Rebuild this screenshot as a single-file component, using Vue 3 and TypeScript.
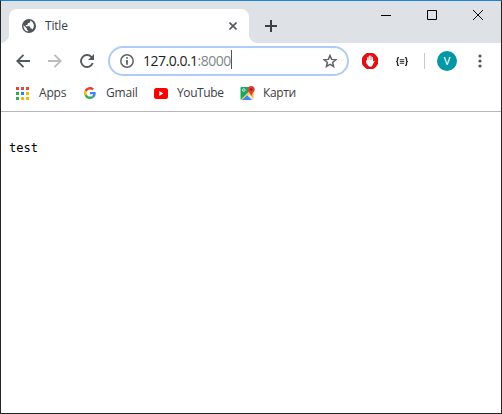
<script setup lang="ts">
import { ref } from 'vue'

interface Bookmark {
  id: string
  label: string
}

const host = ref<string>('127.0.0.1')
const port = ref<string>(':8000')
const bookmarks: Bookmark[] = [
  { id: 'apps', label: 'Apps' },
  { id: 'gmail', label: 'Gmail' },
  { id: 'youtube', label: 'YouTube' },
  { id: 'maps', label: 'Карти' },
]
const appColors: string[] = [
  '#ea4335', '#ea4335', '#ea4335',
  '#34a853', '#1a8cf0', '#fbb505',
  '#34a853', '#fbb505', '#fbb505',
]
</script>

<template>
  <div class="window">
    <header class="tabstrip">
      <div class="tab">
        <svg class="globe" viewBox="0 0 14 14">
          <circle cx="7" cy="7" r="7" fill="#50545a" />
          <path d="M8.2 1.4V2.7c0 .7-.6 1.2-1.3 1.2H5.8v1.2c0 .5-.4.9-.9.9H3.700v1.200H7.500c.5 0 .8.4.8.8v1.600h.9c.6 0 1 .3 1.200.8A5.600 5.600 0 0 0 8.200 1.400z" fill="#fff" />
          <path d="M1.500 6.200 4.900 9.500v.7c0 .7.600 1.200 1.300 1.200v1.200A5.600 5.600 0 0 1 1.500 6.200z" fill="#fff" />
        </svg>
        <span class="tab-title">Title</span>
        <svg class="tab-close" viewBox="0 0 8 8"><path d="M.5.5l7 7M7.500.5l-7 7" stroke="#55595e" stroke-width="1.600" /></svg>
      </div>
      <svg class="new-tab" viewBox="0 0 12 12"><path d="M6 0v12M0 6h12" stroke="#3c4043" stroke-width="2" /></svg>
      <div class="controls">
        <svg width="10" height="10" viewBox="0 0 10 10"><path d="M0 5.500h10" stroke="#000" /></svg>
        <svg width="10" height="10" viewBox="0 0 10 10"><path d="M.5.5h9v9h-9z" fill="none" stroke="#000" /></svg>
        <svg width="10" height="10" viewBox="0 0 10 10"><path d="M0 0l10 10M10 0L0 10" stroke="#000" /></svg>
      </div>
    </header>

    <nav class="toolbar">
      <div class="navigation">
        <svg viewBox="0 0 14 14"><path d="M14 7H1.500M7.500.8L1.300 7l6.200 6.200" fill="none" stroke="#55595e" stroke-width="1.900" /></svg>
        <svg viewBox="0 0 14 14"><path d="M0 7h12.500M6.500.8L12.700 7l-6.200 6.200" fill="none" stroke="#babcbe" stroke-width="1.900" /></svg>
        <svg viewBox="0 0 14 14">
          <path d="M12.700 9A6 6 0 1 1 11.300 2.800L12.200 3.700" fill="none" stroke="#55595e" stroke-width="1.900" />
          <path d="M14 0v6H8z" fill="#55595e" />
        </svg>
      </div>
      <div class="omnibox">
        <svg class="info" viewBox="0 0 14 14">
          <circle cx="7" cy="7" r="6.200" fill="none" stroke="#5f6368" stroke-width="1.500" />
          <path d="M7 3.200v1.600M7 6v4.800" stroke="#5f6368" stroke-width="1.800" />
        </svg>
        <span class="host">{{ host }}</span><span class="port">{{ port }}</span><i class="caret"></i>
        <svg class="star" viewBox="0 0 14 14"><path d="M7 1.500l1.600 3.900 4.200.3-3.200 2.700 1 4.100L7 10.300l-3.600 2.200 1-4.100L1.200 5.700l4.200-.3z" fill="none" stroke="#5f6368" stroke-width="1.500" /></svg>
      </div>
      <svg class="blocker" viewBox="0 0 16 16">
        <path d="M5.200 0h5.600Q12 .2 13.500 1.800 15.800 4 16 5.200v5.600q-.2 1.200-2.500 3.400Q12 15.800 10.800 16H5.200Q4 15.800 2.500 14.200.2 12 0 10.800V5.200Q.2 4 2.500 1.800 4 .2 5.200 0z" fill="#e40d12" />
        <path d="M5.800 8V4.600M7.300 7.500V3.200M8.900 7.500V3.200M10.400 8V4.600" stroke="#fff" stroke-width="1.200" stroke-linecap="round" />
        <path d="M5.200 7h5.800v3.500c0 2-1 3.200-2.600 3.200-1.500 0-2.500-.8-3.200-2.400z" fill="#fff" />
        <path d="M10.500 10.800l1.500-2.500M5.200 10.500L4.500 8" stroke="#fff" stroke-width="1.200" stroke-linecap="round" />
      </svg>
      <svg class="braces" viewBox="0 0 14 10">
        <path d="M3.700.8H3q-1 0-1 1v1.700Q2 4.800.5 5 2 5.200 2 6.500v1.700q0 1 1 1h.7M10.300.8h.7q1 0 1 1v1.700q0 1.300 1.500 1.500-1.500.2-1.500 1.500v1.700q0 1-1 1h-.7" fill="none" stroke="#202124" stroke-width="1.400" />
        <path d="M4.500 3h5M4.500 5h5M4.500 7h5" stroke="#333" stroke-width="1.100" />
      </svg>
      <i class="divider"></i>
      <span class="avatar">V</span>
      <svg class="more" viewBox="0 0 4 14"><g fill="#50545a"><circle cx="2" cy="2" r="1.600" /><circle cx="2" cy="7" r="1.600" /><circle cx="2" cy="12" r="1.600" /></g></svg>
    </nav>

    <div class="bookmarks">
      <div v-for="item in bookmarks" :key="item.id" class="bookmark" :class="item.id">
        <svg v-if="item.id === 'apps'" width="13" height="13" viewBox="0 0 13 13">
          <rect v-for="(color, i) in appColors" :key="i" :x="(i % 3) * 5" :y="Math.floor(i / 3) * 5" width="3" height="3" :fill="color" />
        </svg>
        <svg v-else-if="item.id === 'gmail'" width="12" height="12" viewBox="0 0 48 48">
          <path fill="#ea4335" d="M24 9.500c3.540 0 6.710 1.220 9.210 3.600l6.850-6.850C35.900 2.380 30.470 0 24 0 14.620 0 6.510 5.380 2.560 13.220l7.980 6.190C12.430 13.720 17.740 9.500 24 9.500z" />
          <path fill="#4285f4" d="M46.980 24.550c0-1.570-.15-3.090-.38-4.550H24v9.020h12.940c-.58 2.960-2.260 5.480-4.780 7.180l7.730 6c4.510-4.180 7.090-10.360 7.090-17.650z" />
          <path fill="#fbbc05" d="M10.530 28.590a14.500 14.500 0 0 1 0-9.180l-7.980-6.190a24 24 0 0 0 0 21.560z" />
          <path fill="#34a853" d="M24 48c6.480 0 11.930-2.130 15.890-5.810l-7.730-6c-2.150 1.450-4.920 2.300-8.160 2.300-6.260 0-11.570-4.220-13.470-9.910l-7.980 6.190C6.510 42.620 14.620 48 24 48z" />
        </svg>
        <svg v-else-if="item.id === 'youtube'" width="14" height="11" viewBox="0 0 14 11">
          <rect width="14" height="11" rx="2.500" fill="#f00" /><path d="M5.300 3v5l4-2.500z" fill="#fff" />
        </svg>
        <svg v-else width="15" height="15" viewBox="0 0 15 15">
          <path d="M1.500 1h11v13h-11Q.5 14 .5 13V2q0-1 1-1z" fill="#1fa463" />
          <path d="M1 14L11.500 3.500l2 2V13l-1 1z" fill="#e5e5e5" />
          <path d="M10.500 8.500l3-2V13z" fill="#fbc02d" />
          <path d="M1 13.500l8-8 1.500 1.500-7 7z" fill="#ffd04b" />
          <path d="M2 14l5-4.700 5 4.700z" fill="#4285f4" />
          <circle cx="3.800" cy="4" r="1.300" fill="none" stroke="#d9f2e4" stroke-width=".9" />
          <path d="M11.200 0a3.500 3.500 0 0 1 3.500 3.500c0 2.700-2.700 3.300-3.500 7-.8-3.700-3.500-4.300-3.500-7A3.500 3.500 0 0 1 11.200 0z" fill="#dc4437" />
          <circle cx="11.200" cy="3.400" r="1.200" fill="#7b231c" />
        </svg>
        <span class="label">{{ item.label }}</span>
      </div>
    </div>

    <main class="page"><pre>test</pre></main>
  </div>
</template>

<style>
body {
  margin: 0;
}
</style>

<style scoped>
.window {
  box-sizing: border-box;
  width: 502px;
  height: 414px;
  border: 1px solid #252526;
  border-top-color: #1883d7;
  background: #fff;
  font-family: "Open Sans", "Noto Sans", sans-serif;
  font-size: 12px;
  color: #3c4043;
  overflow: hidden;
}
svg {
  display: block;
  flex: none;
}
.tabstrip {
  display: flex;
  height: 42px;
  background: #dee1e6;
}
.tab {
  position: relative;
  box-sizing: border-box;
  display: flex;
  align-items: center;
  width: 240px;
  height: 34px;
  margin: 8px 0 0 8px;
  padding: 0 12px 0 13px;
  border-radius: 8px 8px 0 0;
  background: #fff;
}
.tab::before,
.tab::after {
  content: "";
  position: absolute;
  bottom: 0;
  width: 8px;
  height: 8px;
}
.tab::before {
  left: -8px;
  background: radial-gradient(circle at 0 0, transparent 7.500px, #fff 8px);
}
.tab::after {
  right: -8px;
  background: radial-gradient(circle at 100% 0, transparent 7.500px, #fff 8px);
}
.globe {
  width: 14px;
  height: 14px;
}
.tab-title {
  margin-left: 9px;
  padding-bottom: 1px;
  letter-spacing: -0.2px;
}
.tab-close {
  width: 8px;
  height: 8px;
  margin-left: auto;
}
.new-tab {
  width: 12px;
  height: 12px;
  margin: 19px 0 0 16px;
}
.controls {
  display: flex;
  gap: 36px;
  margin: 9px 18px 0 auto;
}
.toolbar {
  display: flex;
  align-items: center;
  height: 36px;
  padding-left: 15px;
}
.navigation {
  display: flex;
  gap: 18px;
}
.navigation svg {
  width: 14px;
  height: 14px;
}
.omnibox {
  box-sizing: border-box;
  display: flex;
  align-items: center;
  width: 241px;
  height: 30px;
  margin-left: 14px;
  padding: 0 10px;
  border: 2px solid #aecbfa;
  border-radius: 15px;
  font-size: 14px;
}
.info {
  width: 14px;
  height: 14px;
  margin-right: 9px;
}
.host,
.port {
  padding-bottom: 1px;
  letter-spacing: -0.5px;
}
.host {
  color: #202124;
}
.port {
  color: #80868b;
}
.caret {
  width: 1px;
  height: 19px;
  margin-top: -3px;
  background: #50545a;
}
.star {
  width: 14px;
  height: 14px;
  margin-left: auto;
}
.blocker {
  width: 16px;
  height: 16px;
  margin-left: 13px;
}
.braces {
  width: 14px;
  height: 9px;
  margin-left: 17px;
}
.divider {
  width: 1px;
  height: 16px;
  margin-left: 15px;
  background: #c8cacd;
}
.avatar {
  width: 20px;
  height: 20px;
  margin-left: 12px;
  border-radius: 50%;
  background: #0097a7;
  color: #fff;
  font: 11px/21px Roboto, sans-serif;
  text-align: center;
}
.more {
  width: 4px;
  height: 14px;
  margin-left: 20.5px;
}
.bookmarks {
  display: grid;
  grid-template-columns: 68px 70px 86px 60px;
  align-items: center;
  box-sizing: border-box;
  height: 33px;
  padding: 0 0 4px 15px;
  border-bottom: 1px solid #b6b6b6;
}
.bookmark {
  display: flex;
  align-items: center;
  gap: 10px;
}
.youtube {
  gap: 9px;
}
.maps {
  gap: 8px;
}
.label {
  padding-bottom: 1px;
  letter-spacing: -0.4px;
}
.apps .label,
.gmail .label {
  letter-spacing: -0.2px;
}
.page {
  padding: 29px 8px 0;
}
.page pre {
  margin: 0;
  font: 12px/14px "DejaVu Sans Mono", monospace;
  color: #000;
}
</style>
